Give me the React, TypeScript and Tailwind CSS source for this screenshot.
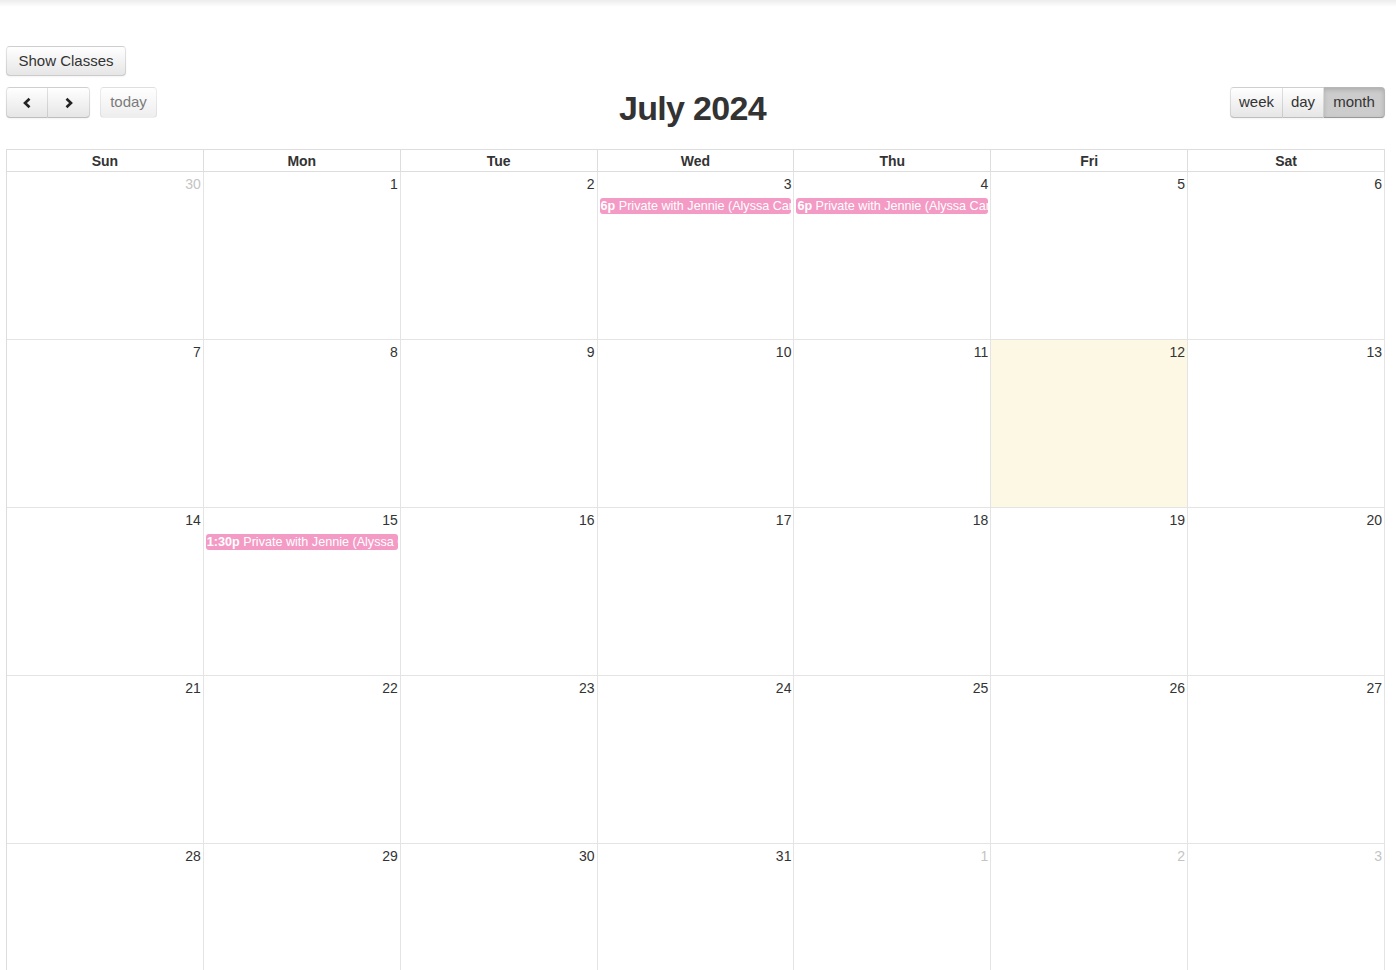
import React from "react";

type Day = { n: number; other?: boolean; today?: boolean; event?: string };

const weeks: Day[][] = [
  [{ n: 30, other: true }, { n: 1 }, { n: 2 }, { n: 3, event: "6p" }, { n: 4, event: "6p" }, { n: 5 }, { n: 6 }],
  [{ n: 7 }, { n: 8 }, { n: 9 }, { n: 10 }, { n: 11 }, { n: 12, today: true }, { n: 13 }],
  [{ n: 14 }, { n: 15, event: "1:30p" }, { n: 16 }, { n: 17 }, { n: 18 }, { n: 19 }, { n: 20 }],
  [{ n: 21 }, { n: 22 }, { n: 23 }, { n: 24 }, { n: 25 }, { n: 26 }, { n: 27 }],
  [{ n: 28 }, { n: 29 }, { n: 30 }, { n: 31 }, { n: 1, other: true }, { n: 2, other: true }, { n: 3, other: true }],
];

const dayNames = ["Sun", "Mon", "Tue", "Wed", "Thu", "Fri", "Sat"];

const btn =
  "h-[31px] text-[15px] text-[#333] bg-linear-to-b from-white to-[#e6e6e6] border border-[rgba(0,0,0,0.1)] border-b-[rgba(0,0,0,0.25)] shadow-[inset_0_1px_0_rgba(255,255,255,0.2),0_1px_2px_rgba(0,0,0,0.05)] flex items-center justify-center";

function Chevron({ dir }: { dir: "left" | "right" }) {
  return (
    <svg width="10" height="12" viewBox="0 0 10 12">
      <polyline
        points={dir === "left" ? "7.5,1.8 3,6 7.5,10.2" : "2.5,1.8 7,6 2.5,10.2"}
        fill="none"
        stroke="#222"
        strokeWidth="2.6"
        strokeLinecap="butt"
        strokeLinejoin="miter"
      />
    </svg>
  );
}

export default function App() {
  return (
    <div className="min-h-screen bg-white text-[#333] font-['Liberation_Sans',Arial,Helvetica,sans-serif]">
      <div className="h-[7px] bg-linear-to-b from-[#ececec] to-white" />
      <div className="pl-[6px] pr-[11px] pt-[39px]">
        <button className="h-[30px] w-[120px] rounded-[4px] text-[15px] text-[#333] bg-linear-to-b from-white to-[#e6e6e6] border border-[rgba(0,0,0,0.1)] border-b-[rgba(0,0,0,0.2)] shadow-[0_1px_2px_rgba(0,0,0,0.05)] flex items-center justify-center">
          Show Classes
        </button>

        <div className="mt-[11px] flex items-start justify-between h-[40px]">
          <div className="flex items-start w-[237px]">
            <div className="flex">
              <button className={`${btn} w-[42px] rounded-l-[4px]`}>
                <Chevron dir="left" />
              </button>
              <button className={`${btn} w-[42px] rounded-r-[4px] border-l-0`}>
                <Chevron dir="right" />
              </button>
            </div>
            <button className="ml-[10px] h-[31px] w-[57px] rounded-[4px] text-[15px] text-[#333] opacity-65 bg-linear-to-b from-white to-[#e6e6e6] border border-[rgba(0,0,0,0.1)] flex items-center justify-center">
              today
            </button>
          </div>
          <h2 className="text-[34px] leading-[40px] font-bold tracking-[-0.02em] text-[#333] mt-[1px]">
            July 2024
          </h2>
          <div className="flex w-[243px] justify-end">
            <button className={`${btn} w-[53px] rounded-l-[4px]`}>week</button>
            <button className={`${btn} w-[41px] border-l-0`}>day</button>
            <button className="h-[31px] w-[61px] text-[15px] text-[#333] bg-[#ccc] border border-l-0 border-[rgba(0,0,0,0.1)] border-b-[rgba(0,0,0,0.25)] rounded-r-[4px] shadow-[inset_0_2px_4px_rgba(0,0,0,0.15),0_1px_2px_rgba(0,0,0,0.05)] flex items-center justify-center">
              month
            </button>
          </div>
        </div>

        <div className="mt-[22px] border-l border-t border-[#ddd]">
          <div className="grid grid-cols-7">
            {dayNames.map((d) => (
              <div
                key={d}
                className="h-[22px] border-r border-b border-[#ddd] text-[14px] font-bold leading-[23px] text-center text-[#333]"
              >
                {d}
              </div>
            ))}
          </div>
          {weeks.map((w, wi) => (
            <div key={wi} className="grid grid-cols-7">
              {w.map((d, di) => (
                <div
                  key={di}
                  className={`h-[168px] border-r border-b border-[#e4e4e4] flex flex-col ${d.today ? "bg-[#fcf8e3]" : ""}`}
                >
                  <div
                    className={`text-right text-[14px] leading-[20px] pt-[2px] pr-[2px] ${d.other ? "text-[#c4c4c4]" : "text-[#333]"}`}
                  >
                    {d.n}
                  </div>
                  {d.event && (
                    <div className="mt-[4px] mx-[2px] h-[16px] rounded-[3px] bg-[#f39bc5] text-white text-[12.6px] leading-[16px] pl-[1px] whitespace-nowrap overflow-hidden">
                      <span className="font-bold">{d.event}</span> Private with Jennie (Alyssa Carter)
                    </div>
                  )}
                </div>
              ))}
            </div>
          ))}
        </div>
      </div>
    </div>
  );
}
